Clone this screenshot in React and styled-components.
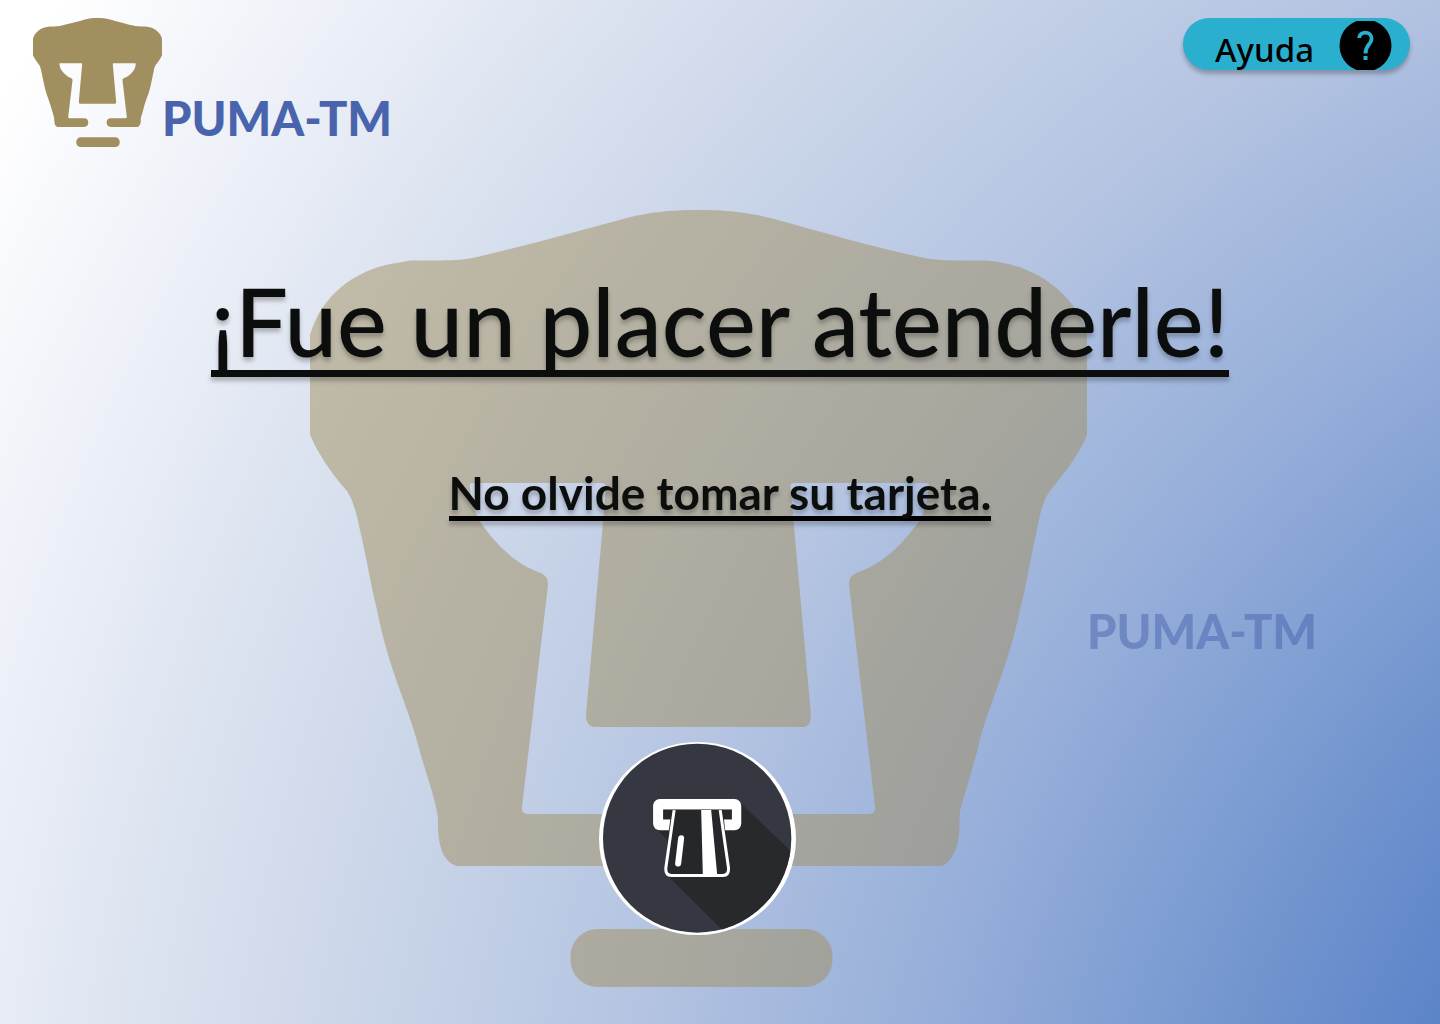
import React from "react";
import styled, { createGlobalStyle } from "styled-components";

const GlobalStyle = createGlobalStyle`
  *, *::before, *::after {
    box-sizing: border-box;
  }
  body {
    margin: 0;
    font-family: Lato, "Noto Sans", sans-serif;
    color: #0b0e0c;
  }
`;

const Page = styled.div`
  position: relative;
  min-height: 100vh;
  overflow: hidden;
  background: radial-gradient(
    circle farthest-corner at 146% 128%,
    #5b84c8 29%,
    #94add9 48%,
    #b3c3e1 60%,
    #d5deed 77%,
    #f2f4fa 91%,
    #ffffff 98%
  );
`;

const Header = styled.header`
  position: relative;
  display: flex;
  justify-content: space-between;
  align-items: flex-start;
  padding: 18px 30px 0 33px;
`;

const Brand = styled.div`
  display: flex;
  align-items: flex-end;
`;

const Logo = styled.svg`
  display: block;
  flex: none;
  width: ${(p) => p.$size}px;
  height: ${(p) => p.$size}px;
  fill: #a28f5f;
`;

const BrandName = styled.span`
  padding-bottom: 5px;
  font-size: 47px;
  font-weight: 900;
  line-height: 48px;
  white-space: nowrap;
  color: #4964ad;
`;

const Watermark = styled.div`
  position: absolute;
  top: 210px;
  left: 50%;
  display: flex;
  align-items: center;
  margin-left: -410px;
  opacity: 0.5;

  ${BrandName} {
    padding: 64px 0 0;
  }
`;

const HelpButton = styled.button`
  display: flex;
  align-items: flex-start;
  justify-content: space-between;
  width: 227px;
  height: 52px;
  padding: 0 18px 0 32px;
  border: 0;
  border-radius: 26px;
  background: #2bafce;
  box-shadow: 0 4px 4px rgba(0, 0, 0, 0.25);
  font-family: "Noto Sans", sans-serif;
  font-size: 33px;
  font-weight: 500;
  line-height: 64px;
  color: #000;
  cursor: pointer;
`;

const HelpIcon = styled.svg`
  display: block;
  width: 53px;
  height: 49px;
  margin-top: 3px;
`;

const Main = styled.main`
  position: relative;
  display: flex;
  flex-direction: column;
  align-items: center;
  padding: 125px 24px 88px;
`;

const Title = styled.h1`
  margin: 0;
  border-bottom: 7px solid #0b0e0c;
  filter: drop-shadow(0 4px 2px rgba(0, 0, 0, 0.25));
  font-size: 94px;
  font-weight: 500;
  line-height: 98px;
`;

const Reminder = styled.p`
  margin: 93px 0 0;
  border-bottom: 5px solid #000;
  filter: drop-shadow(0 4px 2px rgba(0, 0, 0, 0.25));
  font-size: 46px;
  font-weight: 700;
  line-height: 46px;
`;

const CardSlot = styled.svg`
  display: block;
  width: 197px;
  height: 193px;
  margin: 221px 45px 0 0;
`;

function PumaLogo({ size }) {
  return (
    <Logo $size={size} viewBox="0 0 777 777" aria-hidden="true">
      <path
        d="M0 125 C3 115 6 108 13 97 C26 78 44 66 63 59 C75 54 88 53 100 50.5
           H130 C145 50 155 50 167 47 C215 36 265 22 313 9 C340 2 358 0 388 0
           C418 0 436 2 464 9 C512 22 562 37 610 47 C622 50 632 50 647 50.5
           H677 C690 52 702 54 714 59 C733 66 751 79 764 97 C771 108 774 115 777 125
           V225 C773 236 762 253 754 263 L740 281 C733 290 730 304 727 320
           C720 350 717 373 710 400 C697 462 677 497 667 542 C662 560 656 580 651 597
           C649 604 650 608 649.5 613 C650 632 645 650 632 656 H470
           C453 656 443.5 647 443.5 630 C443.5 613 453 604 470 604 H558
           Q566 604 565 597 L539 375 Q539 366 546 363 C571 355 591 336 607 314
           C614 303 618 292 619 276 Q619 273 616 273 H484 Q480 273 480.5 278
           L501 505 Q501 516 494 517 H284 Q276 516 276 505
           L296 278 Q296 273 292 273 H162 Q159 273 160 277
           C161 291 164 303 171 313 C187 336 207 355 231 363 Q238 366 238 375
           L212 597 Q211 604 219 604 H307 C324 604 333 613 333 630
           C333 647 324 656 307 656 H147 C134 652 128 638 128 613
           C128 606 127 601 125 593 C121 576 115 560 110 542
           C99 497 79 462 67 400 C60 372 57 350 50 320 C47 306 44 292 37 281
           C20 262 8 243 0 225 Z"
      />
      <rect x="260.5" y="719" width="262" height="58" rx="27" />
    </Logo>
  );
}

function CardSlotIcon() {
  return (
    <CardSlot
      viewBox="27 36 590 578"
      preserveAspectRatio="none"
      role="img"
      aria-label="Retire su tarjeta"
    >
      <defs>
        <clipPath id="disc">
          <ellipse cx="321" cy="324" rx="282" ry="283" />
        </clipPath>
      </defs>
      <ellipse cx="322" cy="325" rx="295" ry="289" fill="#fff" />
      <g clipPath="url(#disc)">
        <rect x="27" y="36" width="590" height="578" fill="#363841" />
        <path d="M448 216 L617 378 V614 H412 L232 436 V330 L195 292 Z" fill="#28292d" />
      </g>
      <rect x="189" y="207" width="264" height="93" rx="20" fill="#fff" />
      <rect x="219" y="238" width="206" height="30" fill="#26272b" />
      <path d="M241 266 H401 L405 302 H236 Z" fill="#26272b" />
      <path
        d="M252 240 L227 414 Q226 435 244 436 H398 Q416 435 415 414 L390 240"
        fill="#26272b"
        stroke="#fff"
        strokeWidth="9"
      />
      <path d="M333 240 H363 L381 434 H338 Z" fill="#fff" />
      <path d="M273 324 L264 400" stroke="#fff" strokeWidth="18" strokeLinecap="round" />
    </CardSlot>
  );
}

function HelpMark() {
  return (
    <HelpIcon viewBox="0 0 53 49" aria-hidden="true">
      <circle cx="26.5" cy="24.5" r="26" />
      <path
        d="M20.2 17 C20.2 9.8 32.6 9.8 32.6 17.5 C32.6 23.5 26.5 23.5 26.5 32.5"
        fill="none"
        stroke="#2bafce"
        strokeWidth="3.8"
      />
      <rect x="24.5" y="35" width="4" height="4" fill="#2bafce" />
    </HelpIcon>
  );
}

export default function App() {
  return (
    <Page>
      <GlobalStyle />
      <Watermark>
        <PumaLogo size={777} />
        <BrandName>PUMA-TM</BrandName>
      </Watermark>
      <Header>
        <Brand>
          <PumaLogo size={129} />
          <BrandName>PUMA-TM</BrandName>
        </Brand>
        <HelpButton type="button">
          Ayuda
          <HelpMark />
        </HelpButton>
      </Header>
      <Main>
        <Title>¡Fue un placer atenderle!</Title>
        <Reminder>No olvide tomar su tarjeta.</Reminder>
        <CardSlotIcon />
      </Main>
    </Page>
  );
}
